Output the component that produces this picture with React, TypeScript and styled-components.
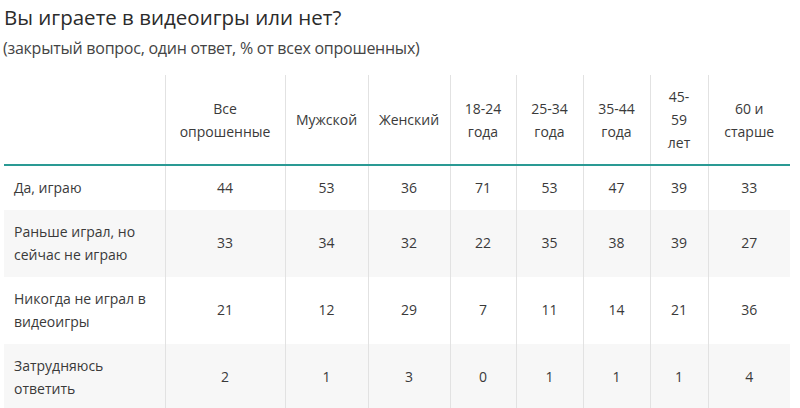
import React from "react";
import styled, { createGlobalStyle } from "styled-components";

const Global = createGlobalStyle`
  html, body { margin: 0; padding: 0; background: #fff; }
  body { font-family: "Open Sans", "Noto Sans", sans-serif; color: #333; }
`;

const Page = styled.div`
  width: 800px;
  height: 408px;
  overflow: hidden;
  padding: 0 0 0 4px;
  box-sizing: border-box;
`;

const Title = styled.h1`
  margin: 0;
  padding-top: 4px;
  font-size: 20.5px;
  line-height: 26px;
  font-weight: 400;
  color: #2b2b2b;
`;

const Subtitle = styled.p`
  margin: 8px 0 0 -1px;
  font-size: 16px;
  line-height: 20px;
  color: #444;
  letter-spacing: -0.25px;
`;

const Table = styled.table`
  margin-top: 17px;
  width: 786px;
  border-collapse: collapse;
  table-layout: fixed;
  font-size: 14px;
  color: #3a3a3a;
`;

const HeadCell = styled.th`
  font-weight: 400;
  text-align: center;
  vertical-align: middle;
  padding: 10px 6px;
  line-height: 23px;
  border-left: 1px solid #e2e2e2;
  border-bottom: 2px solid #2a9a94;
  &:first-child { border-left: none; }
`;

const Row = styled.tr<{ $shaded: boolean }>`
  background: ${(p) => (p.$shaded ? "#f7f7f7" : "#fff")};
`;

const LabelCell = styled.td`
  text-align: left;
  padding: 10px 10px;
  line-height: 23.5px;
  vertical-align: middle;
`;

const ValueCell = styled.td`
  text-align: center;
  padding: 10px 4px;
  line-height: 23.5px;
  vertical-align: middle;
  border-left: 1px solid #e2e2e2;
`;

const widths = [161, 120, 83, 82, 66, 67, 67, 58, 82];

const headers: React.ReactNode[] = [
  "",
  <>Все<br />опрошенные</>,
  "Мужской",
  "Женский",
  <>18-24<br />года</>,
  <>25-34<br />года</>,
  <>35-44<br />года</>,
  <>45-<br />59<br />лет</>,
  <>60 и<br />старше</>,
];

const rows: { label: React.ReactNode; values: number[] }[] = [
  { label: "Да, играю", values: [44, 53, 36, 71, 53, 47, 39, 33] },
  { label: <>Раньше играл, но<br />сейчас не играю</>, values: [33, 34, 32, 22, 35, 38, 39, 27] },
  { label: <>Никогда не играл в<br />видеоигры</>, values: [21, 12, 29, 7, 11, 14, 21, 36] },
  { label: <>Затрудняюсь<br />ответить</>, values: [2, 1, 3, 0, 1, 1, 1, 4] },
];

export default function App() {
  return (
    <Page>
      <Global />
      <Title>Вы играете в видеоигры или нет?</Title>
      <Subtitle>(закрытый вопрос, один ответ, % от всех опрошенных)</Subtitle>
      <Table>
        <colgroup>
          {widths.map((w, i) => (
            <col key={i} style={{ width: w }} />
          ))}
        </colgroup>
        <thead>
          <tr>
            {headers.map((h, i) => (
              <HeadCell key={i}>{h}</HeadCell>
            ))}
          </tr>
        </thead>
        <tbody>
          {rows.map((r, i) => (
            <Row key={i} $shaded={i % 2 === 1}>
              <LabelCell>{r.label}</LabelCell>
              {r.values.map((v, j) => (
                <ValueCell key={j}>{v}</ValueCell>
              ))}
            </Row>
          ))}
        </tbody>
      </Table>
    </Page>
  );
}
